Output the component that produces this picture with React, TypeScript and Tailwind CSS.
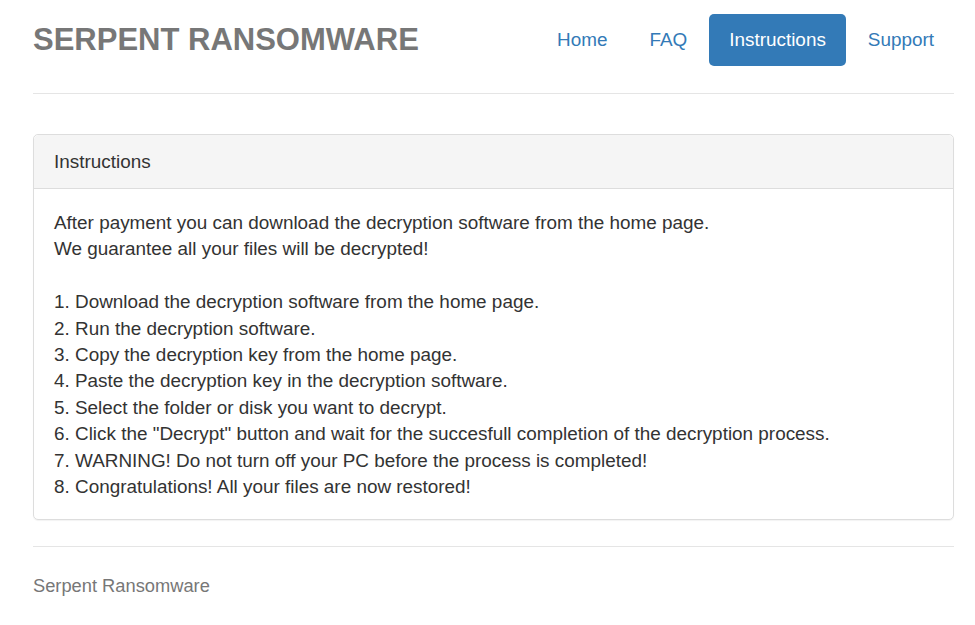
import React from "react";

const steps = [
  "Download the decryption software from the home page.",
  "Run the decryption software.",
  "Copy the decryption key from the home page.",
  "Paste the decryption key in the decryption software.",
  "Select the folder or disk you want to decrypt.",
  'Click the "Decrypt" button and wait for the succesfull completion of the decryption process.',
  "WARNING! Do not turn off your PC before the process is completed!",
  "Congratulations! All your files are now restored!",
];

const navItems = ["Home", "FAQ", "Instructions", "Support"];

const App = () => {
  return (
    <div className="min-h-[625px] bg-white font-['Liberation_Sans',Arial,sans-serif] text-[#333]">
      <div className="mx-[33px] w-[921px] pt-[14px]">
        <div className="flex items-center justify-between border-b border-[#e5e5e5] pb-[27px]">
          <h3 className="text-[31px] font-bold leading-[52px] text-[#777]">SERPENT RANSOMWARE</h3>
          <ul className="flex gap-[2px]">
            {navItems.map((item) => (
              <li key={item}>
                <a
                  className={
                    item === "Instructions"
                      ? "block rounded-[5px] bg-[#337ab7] px-[20px] py-[13px] text-[18.9px] leading-[26px] text-white"
                      : "block rounded-[5px] px-[20px] py-[13px] text-[18.9px] leading-[26px] text-[#337ab7]"
                  }
                >
                  {item}
                </a>
              </li>
            ))}
          </ul>
        </div>

        <div className="mt-[40px] mb-[26px] rounded-[5px] border border-[#ddd] shadow-[0_1px_1px_rgba(0,0,0,0.05)]">
          <div className="rounded-t-[5px] border-b border-[#ddd] bg-[#f5f5f5] px-[20px] pt-[14px] pb-[13px] text-[18.9px] leading-[26px]">
            Instructions
          </div>
          <div className="px-[20px] pt-[21px] pb-[19px] text-[18.9px] leading-[26.4px]">
            <p>After payment you can download the decryption software from the home page.</p>
            <p>We guarantee all your files will be decrypted!</p>
            <p>&nbsp;</p>
            {steps.map((s, i) => (
              <p key={i}>
                {i + 1}. {s}
              </p>
            ))}
          </div>
        </div>

        <div className="border-t border-[#e5e5e5] pt-[26px] text-[18.3px] leading-[26px] text-[#777]">
          Serpent Ransomware
        </div>
      </div>
    </div>
  );
};

export default App;
